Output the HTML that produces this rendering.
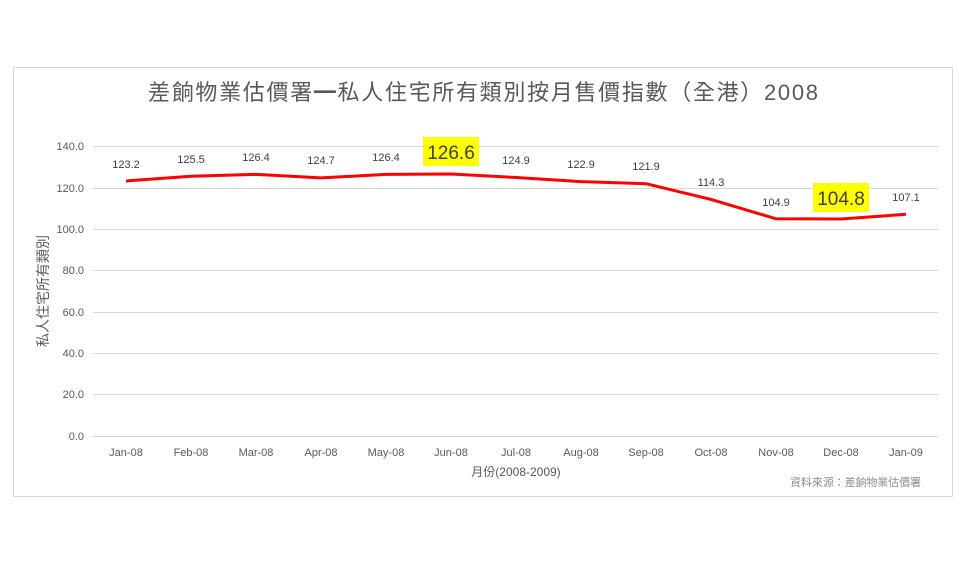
<!DOCTYPE html>
<html><head><meta charset="utf-8"><style>
body{margin:0;background:#fff;width:966px;height:563px;overflow:hidden}
svg{display:block}
text{font-family:"Liberation Sans","Noto Sans CJK TC",sans-serif}
</style></head><body>
<svg width="966" height="563" xmlns="http://www.w3.org/2000/svg">
<rect x="13.5" y="67.5" width="939" height="429" fill="#fff" stroke="#d9d9d9"/>
<text x="148" y="100" font-size="22" fill="#595959" textLength="670" lengthAdjust="spacing">差餉物業估價署━私人住宅所有類別按月售價指數（全港）2008</text>
<g stroke="#d9d9d9" stroke-width="1">
<line x1="93" x2="938" y1="146.5" y2="146.5"/>
<line x1="93" x2="938" y1="188.5" y2="188.5"/>
<line x1="93" x2="938" y1="229.5" y2="229.5"/>
<line x1="93" x2="938" y1="270.5" y2="270.5"/>
<line x1="93" x2="938" y1="312.5" y2="312.5"/>
<line x1="93" x2="938" y1="353.5" y2="353.5"/>
<line x1="93" x2="938" y1="394.5" y2="394.5"/>
<line x1="93" x2="938" y1="436.5" y2="436.5"/>
</g>
<g font-size="11" fill="#595959" text-anchor="end">
<text x="84" y="150">140.0</text><text x="84" y="192">120.0</text><text x="84" y="233">100.0</text><text x="84" y="274">80.0</text><text x="84" y="316">60.0</text><text x="84" y="357">40.0</text><text x="84" y="398">20.0</text><text x="84" y="440">0.0</text>
</g>
<g font-size="11" fill="#595959" text-anchor="middle">
<text x="126" y="456">Jan-08</text><text x="191" y="456">Feb-08</text><text x="256" y="456">Mar-08</text><text x="321" y="456">Apr-08</text><text x="386" y="456">May-08</text><text x="451" y="456">Jun-08</text><text x="516" y="456">Jul-08</text><text x="581" y="456">Aug-08</text><text x="646" y="456">Sep-08</text><text x="711" y="456">Oct-08</text><text x="776" y="456">Nov-08</text><text x="841" y="456">Dec-08</text><text x="906" y="456">Jan-09</text>
<text x="516" y="476" font-size="12">月份(2008-2009)</text>
</g>
<text transform="translate(48,291) rotate(-90)" font-size="14" fill="#595959" text-anchor="middle">私人住宅所有類別</text>
<text x="921" y="486" font-size="11" fill="#8c8c8c" text-anchor="end" textLength="131" lengthAdjust="spacing">資料來源：差餉物業估價署</text>
<polyline fill="none" stroke="#ff0000" stroke-width="3" stroke-linejoin="round" points="126,181 191,176.2 256,174.4 321,177.9 386,174.4 451,174 516,177.5 581,181.6 646,183.7 711,199.4 776,218.8 841,219 906,214.3"/>
<rect x="423" y="137" width="56" height="29" fill="#ffff00"/>
<rect x="813" y="183" width="56" height="29" fill="#ffff00"/>
<g font-size="11" fill="#404040" text-anchor="middle">
<text x="126" y="168">123.2</text><text x="191" y="163">125.5</text><text x="256" y="161">126.4</text><text x="321" y="164">124.7</text><text x="386" y="161">126.4</text><text x="516" y="164">124.9</text><text x="581" y="168">122.9</text><text x="646" y="170">121.9</text><text x="711" y="186">114.3</text><text x="776" y="206">104.9</text><text x="906" y="201">107.1</text>
<text x="451" y="159" font-size="19">126.6</text><text x="841" y="205" font-size="19">104.8</text>
</g>
</svg>
</body></html>
